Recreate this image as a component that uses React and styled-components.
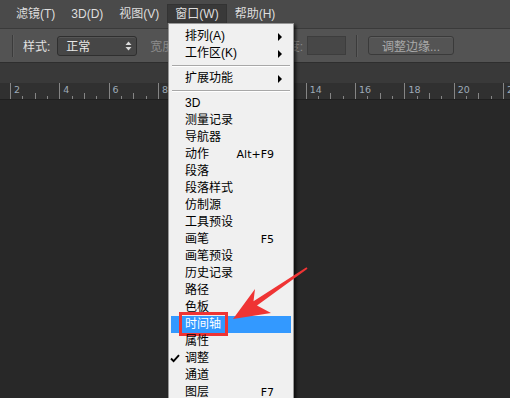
import React from 'react';
import styled, { createGlobalStyle } from 'styled-components';

const GlobalStyle = createGlobalStyle`
  html, body {
    margin: 0;
    padding: 0;
    background: #282828;
  }
  body {
    font-family: "Liberation Sans", "Noto Sans CJK SC", sans-serif;
    font-size: 12px;
  }
`;

const Screen = styled.div`
  position: relative;
  width: 510px;
  height: 398px;
  overflow: hidden;
  display: flex;
  flex-direction: column;
  background: #282828;
`;

// top menu bar
const MenuBar = styled.div`
  height: 29px;
  box-sizing: border-box;
  padding: 4px 0 0 8px;
  display: flex;
  align-items: flex-start;
  background: #4a4a4a;
  border-bottom: 1px solid #3a3a3a;
`;

const TopItem = styled.div`
  height: 19px;
  line-height: 19px;
  padding: 0 7px;
  box-sizing: border-box;
  color: #dedede;
  white-space: nowrap;
  background: ${p => (p.$open ? '#393939' : 'transparent')};
  border: 1px solid ${p => (p.$open ? '#333' : 'transparent')};
  border-bottom: none;
`;

// options bar
const OptionsBar = styled.div`
  height: 34px;
  box-sizing: border-box;
  padding-left: 12px;
  display: flex;
  align-items: center;
  background: #535353;
  border-bottom: 1px solid #2e2e2e;
`;

const Divider = styled.div`
  width: 1px;
  height: 22px;
  background: #3b3b3b;
  box-shadow: 1px 0 0 #5c5c5c;
  margin-right: ${p => p.$mr || 0}px;
  margin-left: ${p => p.$ml || 0}px;
`;

const Label = styled.span`
  color: ${p => (p.$dim ? '#8c8c8c' : '#e2e2e2')};
  margin-left: ${p => p.$ml || 0}px;
  margin-right: ${p => p.$mr || 0}px;
  white-space: nowrap;
`;

const Select = styled.div`
  width: 80px;
  height: 20px;
  box-sizing: border-box;
  display: flex;
  align-items: center;
  justify-content: space-between;
  padding: 0 4px 0 8px;
  background: #464646;
  border: 1px solid #2f2f2f;
  border-radius: 3px;
  box-shadow: inset 0 1px 0 #555;
  color: #e8e8e8;
`;

const Field = styled.div`
  width: ${p => p.$w || 39}px;
  height: 19px;
  box-sizing: border-box;
  background: #474747;
  border: 1px solid #3d3d3d;
  margin-left: ${p => p.$ml || 0}px;
`;

const Button = styled.div`
  width: 86px;
  height: 19px;
  box-sizing: border-box;
  margin-left: 11px;
  display: flex;
  align-items: center;
  justify-content: center;
  background: #545454;
  border: 1px solid #3a3a3a;
  border-radius: 3px;
  box-shadow: inset 0 1px 0 #5e5e5e;
  color: #a9a9a9;
`;

const TabStrip = styled.div`
  height: 20px;
  background: #393939;
`;

// ruler
const Ruler = styled.div`
  height: 17px;
  box-sizing: border-box;
  padding-left: 10px;
  display: flex;
  background: #303030;
  border-bottom: 1px solid #1f1f1f;
`;

const RulerSeg = styled.div`
  flex: 0 0 49.3px;
  box-sizing: border-box;
  border-left: 1px solid #858585;
  padding: 2px 0 0 3px;
  font-family: "DejaVu Sans", sans-serif;
  font-size: 9.5px;
  line-height: 10px;
  color: #9eabb8;
  background-image:
    linear-gradient(#858585, #858585),
    linear-gradient(#858585, #858585),
    linear-gradient(#858585, #858585);
  background-repeat: no-repeat;
  background-size: 1px 3px, 1px 6px, 1px 3px;
  background-position: 11.3px 100%, 23.6px 100%, 36px 100%;
`;

const Canvas = styled.div`
  flex: 1;
  background: #282828;
`;

// dropdown menu
const Dropdown = styled.div`
  position: absolute;
  left: 168px;
  top: 23px;
  width: 126px;
  height: 400px;
  box-sizing: border-box;
  padding-top: 4px;
  background: #f0f0f0;
  border: 1px solid #979797;
  box-shadow: 2px 2px 3px rgba(0, 0, 0, 0.7);
`;

const Row = styled.div`
  position: relative;
  height: 17px;
  margin: 0 2px;
  display: flex;
  align-items: center;
  padding-right: 17px;
  color: ${p => (p.$active ? '#fff' : '#000')};
  background: ${p => (p.$active ? '#3399ff' : 'transparent')};
  white-space: nowrap;
`;

const Gutter = styled.span`
  flex: 0 0 15px;
  display: flex;
  align-items: center;
  margin-left: -2px;
  padding-left: 1px;
`;

const Text = styled.span`
  flex: 1;
  line-height: 17px;
`;

const Shortcut = styled.span`
  font-family: "DejaVu Sans", sans-serif;
  font-size: 11px;
`;

const SubArrow = styled.span`
  width: 0;
  height: 0;
  margin-right: -8px;
  border-top: 4px solid transparent;
  border-bottom: 4px solid transparent;
  border-left: 4px solid #000;
`;

const Separator = styled.div`
  height: 8px;
  margin: 0 3px;
  box-sizing: border-box;
  padding-top: 3px;
  &::before {
    content: '';
    display: block;
    height: 1px;
    background: #a8a8a8;
    box-shadow: 0 1px 0 #ffffff;
  }
`;

const Highlight = styled.div`
  position: absolute;
  left: 8px;
  top: -4px;
  width: 49px;
  height: 24px;
  box-sizing: border-box;
  border: 3px solid #ef3434;
`;

const Overlay = styled.svg`
  position: absolute;
  left: 0;
  top: 0;
  pointer-events: none;
`;

const UpDown = () => (
  <svg width="7" height="10" viewBox="0 0 7 10">
    <path d="M3.5 0.5 L6.5 4 L0.5 4 Z M3.5 9.5 L6.5 6 L0.5 6 Z" fill="#dcdcdc" />
  </svg>
);

const Check = () => (
  <svg width="10" height="9" viewBox="0 0 10 9">
    <path d="M1 4.5 L3.6 7.2 L9 1.2" fill="none" stroke="#000" strokeWidth="1.9" />
  </svg>
);

const topItems = ['滤镜(T)', '3D(D)', '视图(V)', '窗口(W)', '帮助(H)'];

const listItems = [
  { t: '3D' },
  { t: '测量记录' },
  { t: '导航器' },
  { t: '动作', k: 'Alt+F9' },
  { t: '段落' },
  { t: '段落样式' },
  { t: '仿制源' },
  { t: '工具预设' },
  { t: '画笔', k: 'F5' },
  { t: '画笔预设' },
  { t: '历史记录' },
  { t: '路径' },
  { t: '色板' },
  { t: '时间轴', active: true },
  { t: '属性' },
  { t: '调整', checked: true },
  { t: '通道' },
  { t: '图层', k: 'F7' },
];

const rulerLabels = [2, 4, 6, 8, 10, 12, 14, 16, 18, 20, 22];

const MenuRow = ({ item }) => (
  <Row $active={item.active}>
    <Gutter>{item.checked && <Check />}</Gutter>
    <Text>{item.t}</Text>
    {item.k && <Shortcut>{item.k}</Shortcut>}
    {item.sub && <SubArrow />}
    {item.active && <Highlight />}
  </Row>
);

const App = () => {
  return (
    <Screen>
      <GlobalStyle />
      <MenuBar>
        {topItems.map(t => (
          <TopItem key={t} $open={t === '窗口(W)'}>{t}</TopItem>
        ))}
      </MenuBar>

      <OptionsBar>
        <Divider $mr={10} />
        <Label $mr={7}>样式:</Label>
        <Select>
          <span>正常</span>
          <UpDown />
        </Select>
        <Label $dim $ml={13} $mr={5}>宽度:</Label>
        <Field />
        <Label $dim $ml={54}>高度:</Label>
        <Field $ml={4} />
        <Divider $ml={10} />
        <Button>调整边缘...</Button>
      </OptionsBar>

      <TabStrip />

      <Ruler>
        {rulerLabels.map(n => (
          <RulerSeg key={n}>{n}</RulerSeg>
        ))}
      </Ruler>

      <Canvas />

      <Dropdown>
        <MenuRow item={{ t: '排列(A)', sub: true }} />
        <MenuRow item={{ t: '工作区(K)', sub: true }} />
        <Separator />
        <MenuRow item={{ t: '扩展功能', sub: true }} />
        <Separator />
        {listItems.map(it => (
          <MenuRow key={it.t} item={it} />
        ))}
      </Dropdown>

      <Overlay width="510" height="398" viewBox="0 0 510 398">
        <polygon
          points="233,319 271,313 257,305.5 307.5,268.8 306.5,267.2 253.5,301.3 255,289"
          fill="#ef3434"
        />
      </Overlay>
    </Screen>
  );
};

export default App;
